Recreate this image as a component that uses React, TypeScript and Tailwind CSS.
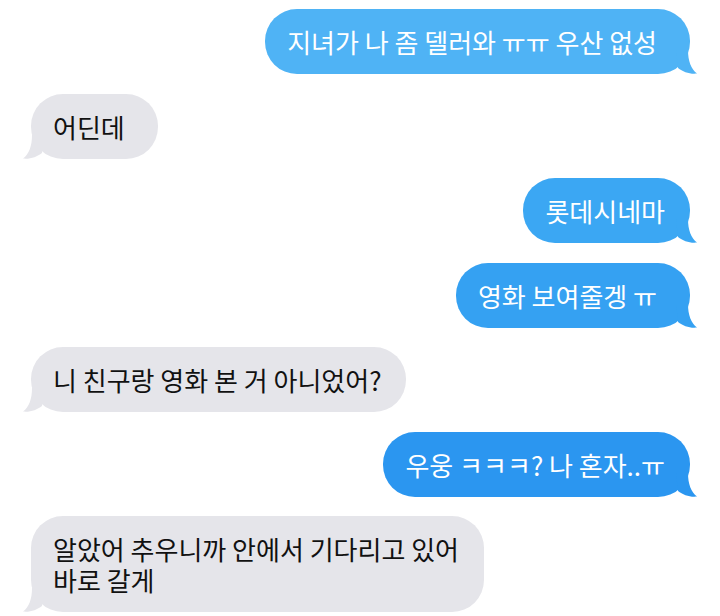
import type { ReactNode } from "react";

type Side = "me" | "them";

const Tail = ({ side, color }: { side: Side; color: string }) => {
  if (side === "me") {
    return (
      <svg
        className="absolute -right-[8px] bottom-0"
        width="22"
        height="24"
        viewBox="0 0 22 24"
      >
        <path d="M0 0 L12 0 C12 11 15 19 21 23.6 C14 24.4 7 22 2 18 Z" fill={color} />
      </svg>
    );
  }
  return (
    <svg
      className="absolute -left-[9px] bottom-0"
      width="22"
      height="24"
      viewBox="0 0 22 24"
    >
      <path d="M22 0 L10 0 C10 11 7 19 1 23.6 C8 24.4 15 22 20 18 Z" fill={color} />
    </svg>
  );
};

const Bubble = ({
  side,
  color,
  wide,
  children,
}: {
  side: Side;
  color: string;
  wide?: boolean;
  children: ReactNode;
}) => {
  const me = side === "me";
  return (
    <div className={me ? "flex justify-end pr-[30px]" : "flex justify-start pl-[31px]"}>
      <div
        className={
          "relative rounded-[32px] pl-[22px] py-[17px] text-[26px] leading-[31px] " +
          (wide ? "pr-[33px] " : "pr-[25px] ") +
          (me ? "text-white" : "text-[#111]")
        }
        style={{ backgroundColor: color }}
      >
        <Tail side={side} color={color} />
        <span className="relative">{children}</span>
      </div>
    </div>
  );
};

const GRAY = "#e5e5ea";

export default function App() {
  return (
    <div
      className="w-[720px] h-[616px] overflow-hidden bg-white pt-[9px] flex flex-col gap-[19.5px]"
      style={{ fontFamily: '"Noto Sans CJK KR", "Noto Sans", sans-serif' }}
    >
      <Bubble side="me" color="#4fb3f5" wide>
        지녀가 나 좀 델러와 ㅠㅠ 우산 없성
      </Bubble>
      <Bubble side="them" color={GRAY} wide>
        어딘데
      </Bubble>
      <Bubble side="me" color="#3ba7f3">
        롯데시네마
      </Bubble>
      <Bubble side="me" color="#35a1f2" wide>
        영화 보여줄겡 ㅠ
      </Bubble>
      <Bubble side="them" color={GRAY}>
        니 친구랑 영화 본 거 아니었어?
      </Bubble>
      <Bubble side="me" color="#2b96f0">
        우웅 ㅋㅋㅋ? 나 혼자..ㅠ
      </Bubble>
      <Bubble side="them" color={GRAY}>
        알았어 추우니까 안에서 기다리고 있어
        <br />
        바로 갈게
      </Bubble>
    </div>
  );
}
